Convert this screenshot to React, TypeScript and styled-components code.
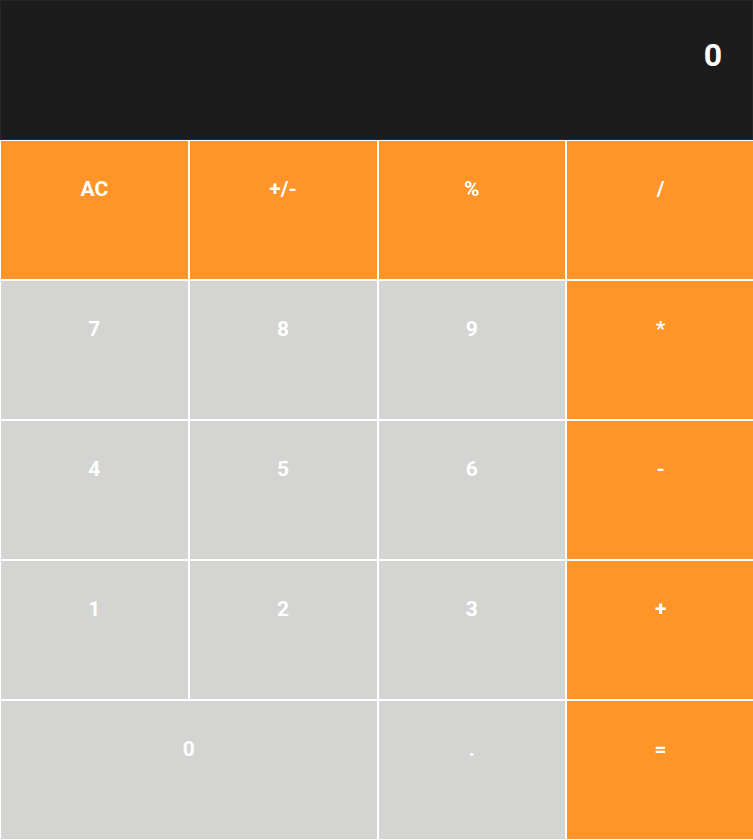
import React from "react";
import styled, { createGlobalStyle } from "styled-components";

const Global = createGlobalStyle`
  html, body { margin: 0; padding: 0; background: #ffffff; overflow: hidden; }
  body { font-family: Roboto, "Liberation Sans", sans-serif; }
  * { box-sizing: border-box; }
`;

const Calculator = styled.div`
  width: 755px;
  display: flex;
  flex-direction: column;
`;

const Display = styled.div`
  height: 140px;
  width: 753px;
  background: #1c1c1c;
  border: 1px solid #262626;
  color: #ffffff;
  font-size: 32px;
  font-weight: 700;
  text-align: right;
  padding: 35px 30px 0 0;
  line-height: normal;
`;

const Keys = styled.div`
  display: grid;
  grid-template-columns: repeat(4, 1fr);
  grid-auto-rows: 140px;
`;

const Key = styled.button<{ $tone: "op" | "num"; $wide?: boolean }>`
  grid-column: ${(p) => (p.$wide ? "span 2" : "auto")};
  background: ${(p) => (p.$tone === "op" ? "#ff9428" : "#d4d4d2")};
  color: #ffffff;
  border: 1px solid #ffffff;
  font-family: Roboto, "Liberation Sans", sans-serif;
  font-size: 21px;
  font-weight: 700;
  display: flex;
  justify-content: center;
  align-items: flex-start;
  padding: 36px 0 0 0;
  line-height: normal;
  margin: 0;
  cursor: pointer;
`;

const keys: { label: string; tone: "op" | "num"; wide?: boolean }[] = [
  { label: "AC", tone: "op" },
  { label: "+/-", tone: "op" },
  { label: "%", tone: "op" },
  { label: "/", tone: "op" },
  { label: "7", tone: "num" },
  { label: "8", tone: "num" },
  { label: "9", tone: "num" },
  { label: "*", tone: "op" },
  { label: "4", tone: "num" },
  { label: "5", tone: "num" },
  { label: "6", tone: "num" },
  { label: "-", tone: "op" },
  { label: "1", tone: "num" },
  { label: "2", tone: "num" },
  { label: "3", tone: "num" },
  { label: "+", tone: "op" },
  { label: "0", tone: "num", wide: true },
  { label: ".", tone: "num" },
  { label: "=", tone: "op" },
];

export default function App() {
  return (
    <>
      <Global />
      <Calculator>
        <Display>0</Display>
        <Keys>
          {keys.map((k) => (
            <Key key={k.label} $tone={k.tone} $wide={k.wide}>
              {k.label}
            </Key>
          ))}
        </Keys>
      </Calculator>
    </>
  );
}
